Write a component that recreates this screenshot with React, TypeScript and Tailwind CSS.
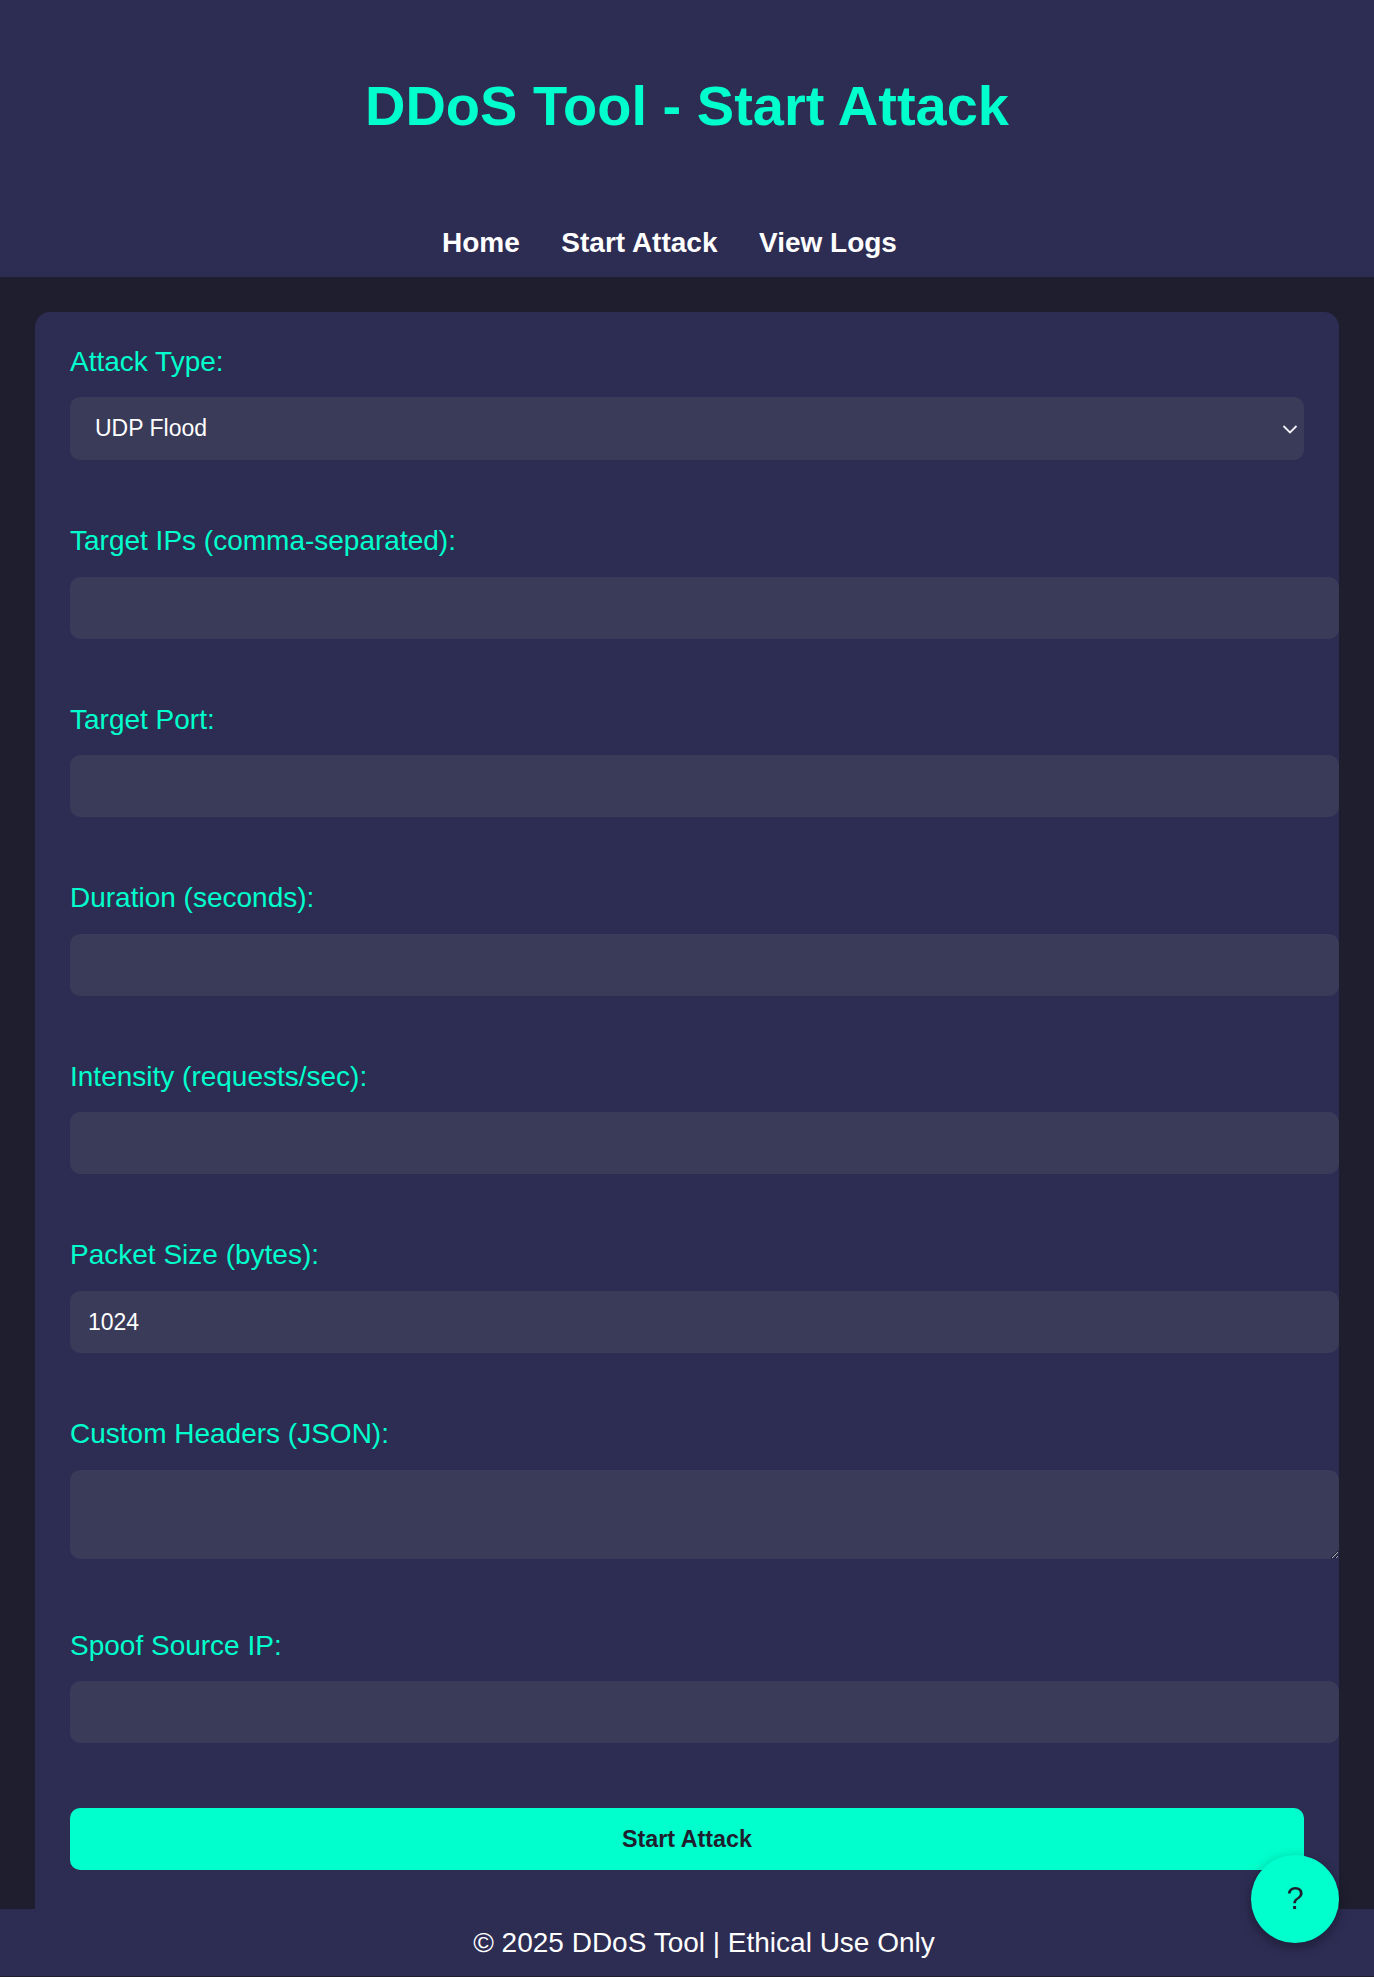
import { useState } from "react";

const fieldLabel = "block text-[28px] leading-[31.6px] text-[#00ffcc] mb-[20px]";
const fieldInput =
    "block w-[calc(100%+35px)] h-[62px] rounded-[10px] bg-[#3a3a59] px-[18px] text-[23px] text-white outline-none";

const textFields = [
    { id: "targets", label: "Target IPs (comma-separated):", value: "" },
    { id: "port", label: "Target Port:", value: "" },
    { id: "duration", label: "Duration (seconds):", value: "" },
    { id: "intensity", label: "Intensity (requests/sec):", value: "" },
    { id: "packet", label: "Packet Size (bytes):", value: "1024" },
];

const App = () => {
    const [values, setValues] = useState<Record<string, string>>(
        Object.fromEntries(textFields.map((f) => [f.id, f.value]))
    );

    return (
        <div className="min-h-screen bg-[#1f1e2f] font-['Liberation_Sans',Arial,sans-serif]">
            <header className="bg-[#2d2c53] pt-[74px] pb-[18px] text-center">
                <h1 className="text-[56px] leading-[64px] font-bold text-[#00ffcc]">DDoS Tool - Start Attack</h1>
                <nav className="mt-[89px] flex justify-center gap-[41.5px] pr-[35px] text-[28px] leading-[32px] font-bold text-white">
                    <a href="#">Home</a>
                    <a href="#">Start Attack</a>
                    <a href="#">View Logs</a>
                </nav>
            </header>

            <main className="px-[35px] pt-[35px]">
                <form
                    onSubmit={(e) => e.preventDefault()}
                    className="bg-[#2d2c53] rounded-t-[15px] px-[35px] pt-[33.5px] pb-[39px]"
                >
                    <div className="mb-[65px]">
                        <label className={fieldLabel}>Attack Type:</label>
                        <div className="relative">
                            <select className="block w-full h-[63px] appearance-none rounded-[10px] bg-[#3a3a59] pl-[25px] text-[23px] text-white outline-none">
                                <option>UDP Flood</option>
                                <option>TCP SYN Flood</option>
                                <option>HTTP Flood</option>
                            </select>
                            <svg
                                className="pointer-events-none absolute right-[6px] top-1/2 -translate-y-1/2"
                                width="16"
                                height="16"
                                viewBox="0 0 16 16"
                                fill="none"
                                stroke="#f2f2f5"
                                strokeWidth="1.8"
                            >
                                <path d="M1.5 5 8 11.5 14.5 5" />
                            </svg>
                        </div>
                    </div>

                    {textFields.map((f) => (
                        <div key={f.id} className="mb-[65px]">
                            <label className={fieldLabel}>{f.label}</label>
                            <input
                                type="text"
                                value={values[f.id]}
                                onChange={(e) => setValues({ ...values, [f.id]: e.target.value })}
                                className={fieldInput}
                            />
                        </div>
                    ))}

                    <div className="mb-[71px]">
                        <label className={fieldLabel}>Custom Headers (JSON):</label>
                        <textarea className="block w-[calc(100%+35px)] h-[89px] rounded-[10px] bg-[#3a3a59] px-[18px] py-[14px] text-[23px] text-white outline-none [color-scheme:dark]" />
                    </div>

                    <div className="mb-[65px]">
                        <label className={fieldLabel}>Spoof Source IP:</label>
                        <input type="text" className={fieldInput} />
                    </div>

                    <button
                        type="submit"
                        className="block w-full h-[62px] rounded-[10px] bg-[#00ffcc] text-[23.3px] font-bold text-[#1f1e2f]"
                    >
                        Start Attack
                    </button>
                </form>
            </main>

            <footer className="flex h-[67px] items-center justify-center bg-[#2d2c53] pl-[34px] text-[28px] leading-[32px] text-white">
                © 2025 DDoS Tool | Ethical Use Only
            </footer>

            <button className="fixed bottom-[34px] right-[35px] flex h-[88px] w-[88px] items-center justify-center rounded-full bg-[#00ffcc] text-[31px] text-[#1f1e2f] shadow-[0_4px_12px_rgba(0,0,0,0.35)]">
                ?
            </button>
        </div>
    );
};

export default App;
